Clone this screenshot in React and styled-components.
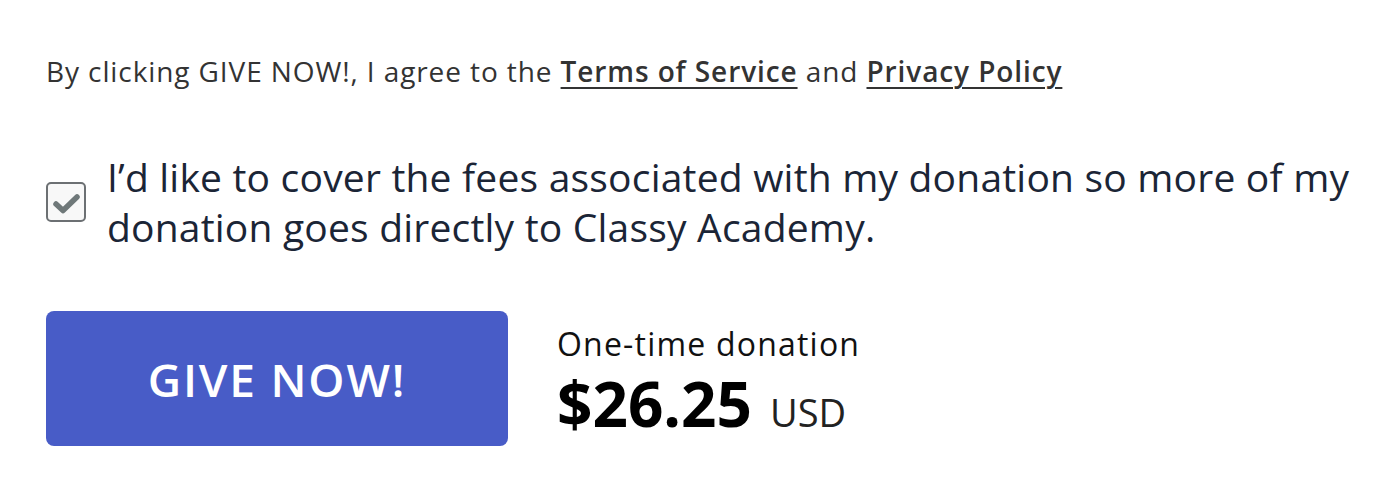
import React from 'react'
import styled, { createGlobalStyle } from 'styled-components'

const Global = createGlobalStyle`
  body {
    margin: 0;
    background: #fff;
    font-family: "Open Sans", "Noto Sans", sans-serif;
  }
`

const Page = styled.div`
  padding: 49px 30px 0 46px;
  display: flex;
  flex-direction: column;
`

const Terms = styled.p`
  margin: 0;
  font-size: 28px;
  line-height: 44px;
  letter-spacing: 0.9px;
  color: #333;
`

const TermsLink = styled.a`
  color: #333;
  font-weight: 600;
  text-decoration: underline;
  text-decoration-thickness: 2px;
  text-underline-offset: 5px;
`

const FeeRow = styled.label`
  display: flex;
  align-items: center;
  gap: 21px;
  margin-top: 59px;
`

const Box = styled.span`
  flex: none;
  width: 40px;
  height: 40px;
  box-sizing: border-box;
  border: 2px solid #6c7073;
  border-radius: 5px;
  background: #f8f8f8;
  display: flex;
`

const FeeText = styled.span`
  font-size: 39px;
  line-height: 50px;
  letter-spacing: 0.2px;
  color: #1b2536;
`

const Footer = styled.div`
  display: flex;
  align-items: center;
  gap: 49px;
  margin-top: 58px;
`

const GiveButton = styled.button`
  flex: none;
  width: 462px;
  height: 135px;
  border: none;
  border-radius: 8px;
  background: #485cc7;
  color: #fff;
  font-family: inherit;
  font-size: 46px;
  font-weight: 600;
  letter-spacing: 1.8px;
`

const Summary = styled.div`
  display: flex;
  flex-direction: column;
  padding-top: 14px;
`

const Kind = styled.span`
  font-size: 32px;
  line-height: 40px;
  letter-spacing: 1.2px;
  color: #111;
`

const Amount = styled.span`
  margin-top: 4px;
  font-size: 62px;
  font-weight: 700;
  line-height: 70px;
  color: #000;
`

const Currency = styled.span`
  font-size: 38px;
  font-weight: 400;
  color: #222;
  margin-left: 18px;
`

const Check = () => (
  <svg width="36" height="36" viewBox="0 0 36 36">
    <path d="M8 20 L15 26.5 L29 13" fill="none" stroke="#6f7879" strokeWidth="5.5" strokeLinecap="round" strokeLinejoin="round" />
  </svg>
)

export default function App() {
  return (
    <>
      <Global />
      <Page>
        <Terms>
          By clicking GIVE NOW!, I agree to the <TermsLink>Terms of Service</TermsLink> and{' '}
          <TermsLink>Privacy Policy</TermsLink>
        </Terms>
        <FeeRow>
          <Box><Check /></Box>
          <FeeText>
            I’d like to cover the fees associated with my donation so more of my donation goes directly to Classy Academy.
          </FeeText>
        </FeeRow>
        <Footer>
          <GiveButton>GIVE NOW!</GiveButton>
          <Summary>
            <Kind>One-time donation</Kind>
            <Amount>$26.25<Currency>USD</Currency></Amount>
          </Summary>
        </Footer>
      </Page>
    </>
  )
}
